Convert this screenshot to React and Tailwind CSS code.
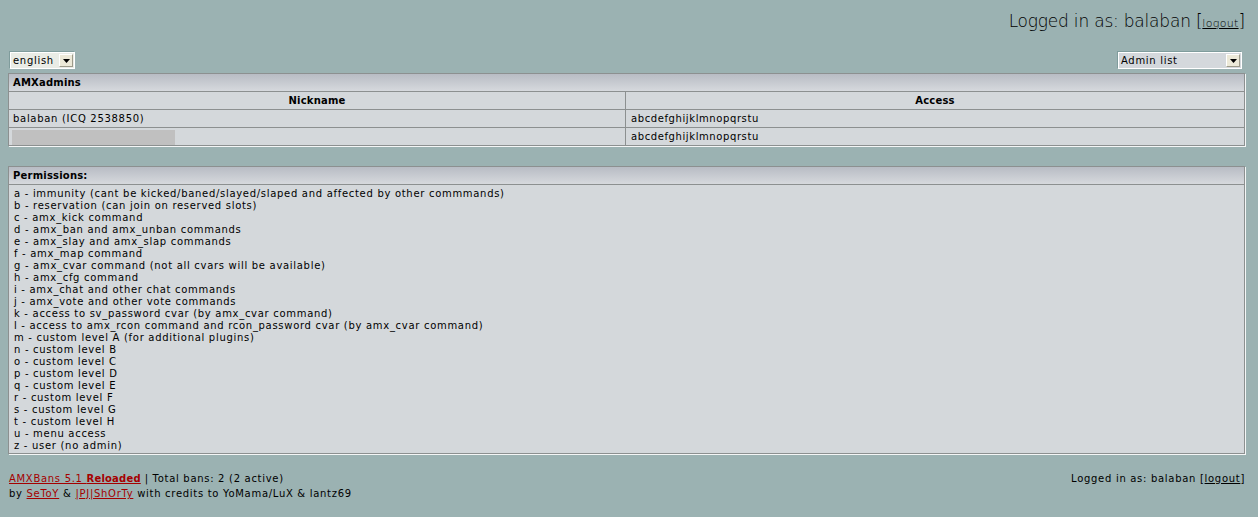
import React from "react";

const perms = [
  "a - immunity (cant be kicked/baned/slayed/slaped and affected by other commmands)",
  "b - reservation (can join on reserved slots)",
  "c - amx_kick command",
  "d - amx_ban and amx_unban commands",
  "e - amx_slay and amx_slap commands",
  "f - amx_map command",
  "g - amx_cvar command (not all cvars will be available)",
  "h - amx_cfg command",
  "i - amx_chat and other chat commands",
  "j - amx_vote and other vote commands",
  "k - access to sv_password cvar (by amx_cvar command)",
  "l - access to amx_rcon command and rcon_password cvar (by amx_cvar command)",
  "m - custom level A (for additional plugins)",
  "n - custom level B",
  "o - custom level C",
  "p - custom level D",
  "q - custom level E",
  "r - custom level F",
  "s - custom level G",
  "t - custom level H",
  "u - menu access",
  "z - user (no admin)",
];

function Arrow() {
  return (
    <div className="w-[14px] h-[13px] bg-[#ece9d8] border-t border-l border-white border-r border-b border-r-[#9d9a8a] border-b-[#9d9a8a] flex items-center justify-center">
      <svg width="7" height="4" viewBox="0 0 7 4">
        <polygon points="0,0 7,0 3.5,4" fill="#000" />
      </svg>
    </div>
  );
}

function Select({ label, w, bg }) {
  return (
    <div className={`h-[17px] ${w} border border-white shadow-[-1px_-1px_0_#7f9c9c] flex items-center justify-between pl-[2px] pr-[1px] ${bg}`}>
      <span className="leading-none">{label}</span>
      <Arrow />
    </div>
  );
}

function TitleRow({ children }) {
  return (
    <div className="h-[18px] flex items-center pl-[4px] font-bold tracking-[0.2px] bg-gradient-to-b from-[#b8bcc4] to-[#d6d9dd] border-b border-[#8c9090]">
      {children}
    </div>
  );
}

export default function App() {
  return (
    <div
      className="w-[1258px] h-[517px] bg-[#9bb2b2] text-[#000] text-[10px] tracking-[0.7px] overflow-hidden"
      style={{ fontFamily: '"DejaVu Sans", Verdana, sans-serif' }}
    >
      <div className="flex justify-end items-center h-[43px] pr-[13px] tracking-normal">
        <span className="text-[17px] font-light tracking-[-0.2px]">
          Logged in as: balaban [<a className="underline text-[11px] text-black tracking-[0.3px]">logout</a>]
        </span>
      </div>
      <div className="pl-[8px] pr-[13px]">
        <div className="flex justify-between items-end h-[30px] pb-[4px] px-[2px] pr-[3px]">
          <Select label="english" w="w-[65px]" bg="bg-[#e9ece6]" />
          <Select label="Admin list" w="w-[124px]" bg="bg-[#d4d8dc]" />
        </div>
        <div className="border border-[#8c9090] shadow-[1px_1px_0_#f4f6f6] bg-[#d4d8db]">
          <TitleRow>AMXadmins</TitleRow>
          <div className="flex h-[18px] border-b border-[#8c9090] font-bold tracking-[0.2px]">
            <div className="w-[617px] border-r border-[#8c9090] flex items-center justify-center">Nickname</div>
            <div className="flex-1 flex items-center justify-center">Access</div>
          </div>
          <div className="flex h-[18px] border-b border-[#8c9090]">
            <div className="w-[617px] border-r border-[#8c9090] flex items-center pl-[4px]">balaban (ICQ 2538850)</div>
            <div className="flex-1 flex items-center pl-[5px] tracking-[0.6px]">abcdefghijklmnopqrstu</div>
          </div>
          <div className="flex h-[17px]">
            <div className="w-[617px] border-r border-[#8c9090] flex items-end pl-[3px]">
              <div className="w-[163px] h-[15px] bg-[#c0c0c0]"></div>
            </div>
            <div className="flex-1 flex items-center pl-[5px] tracking-[0.6px]">abcdefghijklmnopqrstu</div>
          </div>
        </div>

        <div className="mt-[20px] border border-[#8c9090] shadow-[1px_1px_0_#f4f6f6] bg-[#d4d8db]">
          <TitleRow>Permissions:</TitleRow>
          <div className="pl-[5px] pt-[3px] pb-[1px] leading-[12px]">
            {perms.map((p) => (
              <div key={p}>{p}</div>
            ))}
          </div>
        </div>

        <div className="flex justify-between mt-[17px] leading-[15px] pl-[1px]">
          <div>
            <div>
              <a className="text-[#a50000] underline">
                AMXBans 5.1 <b className="tracking-[0.2px]">Reloaded</b>
              </a>{" "}
              | Total bans: 2 (2 active)
            </div>
            <div>
              by <a className="text-[#a50000] underline">SeToY</a> &amp;{" "}
              <a className="text-[#a50000] underline">|PJ|ShOrTy</a> with credits to YoMama/LuX &amp; lantz69
            </div>
          </div>
          <div>
            Logged in as: balaban [<a className="underline">logout</a>]
          </div>
        </div>
      </div>
    </div>
  );
}
